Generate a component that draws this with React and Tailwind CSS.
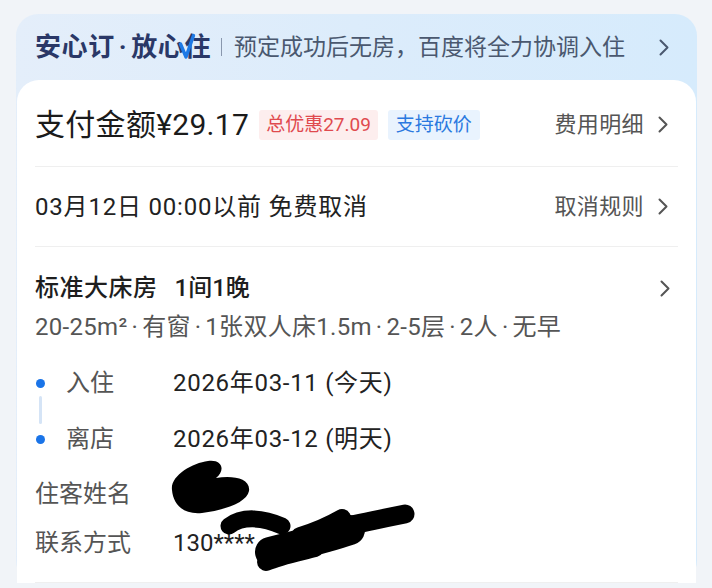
import React from "react";

const Chevron = ({ className = "" }) => (
  <svg width="10" height="17" viewBox="0 0 10 17" className={className} fill="none">
    <path d="M1.5 1.5 L8.5 8.5 L1.5 15.5" stroke="currentColor" strokeWidth="2" strokeLinecap="round" strokeLinejoin="round" />
  </svg>
);

const Dot = () => <span className="mx-[4px]">·</span>;

export default function App() {
  return (
    <div
      className="w-[712px] h-[588px] overflow-hidden bg-[#f1f4f8] pt-[14px] px-[16px] relative"
      style={{ fontFamily: 'Roboto, "Noto Sans CJK SC", "Noto Sans", sans-serif' }}
    >
      <div className="rounded-[22px] bg-gradient-to-r from-[#e4eefa] via-[#dcecfb] to-[#d6ebfc] w-[681px]">
        {/* header */}
        <div className="h-[66px] flex items-center pl-[19px] pr-[28px]">
          <div className="flex items-center text-[26px] font-bold text-[#2a3867] leading-none tracking-[0.6px]">
            <span>安心订</span>
            <span className="mx-[4px]">·</span>
            <span>放心</span>
            <span className="relative">
              <span>住</span>
              <svg className="absolute left-[-6px] top-[-1px]" width="18" height="27" viewBox="0 0 18 27" fill="none">
                <path d="M2.5 11 L8 24 L15.5 2.5" stroke="#1e7ae6" strokeWidth="3.4" strokeLinecap="round" strokeLinejoin="round" />
              </svg>
            </span>
          </div>
          <div className="w-px h-[18px] bg-[#8997ad] ml-[10px] mr-[12px]" />
          <div className="text-[23px] text-[#4a586f] leading-none">预定成功后无房，百度将全力协调入住</div>
          <div className="flex-1" />
          <Chevron className="text-[#4a586f]" />
        </div>

        {/* white card */}
        <div className="mx-px rounded-t-[22px] bg-white px-[18px] relative">
          <div className="h-[87px] border-b border-[#efefef] flex items-center pr-[10px] pt-[3px]">
            <span className="text-[30px] text-[#1b1b1b] leading-none tracking-[0.3px]">支付金额¥29.17</span>
            <span className="ml-[10px] h-[30px] px-[7px] flex items-center bg-[#fdeeee] text-[#e04a4e] text-[19px] rounded-[3px] leading-none">总优惠27.09</span>
            <span className="ml-[10px] h-[30px] px-[8px] flex items-center bg-[#e9f3fe] text-[#2b79e0] text-[19px] rounded-[3px] leading-none">支持砍价</span>
            <div className="flex-1" />
            <span className="text-[22px] text-[#555] leading-none tracking-[0.4px]">费用明细</span>
            <Chevron className="text-[#555] ml-[14px]" />
          </div>

          <div className="h-[80px] border-b border-[#efefef] flex items-center pr-[10px]">
            <span className="text-[24px] text-[#222] leading-none tracking-[0.8px]">03月12日 00:00以前 免费取消</span>
            <div className="flex-1" />
            <span className="text-[22px] text-[#555] leading-none tracking-[0.4px]">取消规则</span>
            <Chevron className="text-[#555] ml-[14px]" />
          </div>

          <div className="border-b border-[#efefef] pb-[17px]">
            <div className="mt-[24px] h-[34px] flex items-center pr-[8px]">
              <span className="text-[24px] font-medium text-[#1e1e1e] leading-none tracking-[0.5px]">标准大床房</span>
              <span className="ml-[17px] text-[24px] font-medium text-[#1e1e1e] leading-none">1间1晚</span>
              <div className="flex-1" />
              <Chevron className="text-[#555]" />
            </div>
            <div className="mt-[5px] h-[34px] flex items-center text-[24px] text-[#555] leading-none tracking-[0.3px]">
              <span>20-25m²</span>
              <Dot />
              <span>有窗</span>
              <Dot />
              <span>1张双人床1.5m</span>
              <Dot />
              <span>2-5层</span>
              <Dot />
              <span>2人</span>
              <Dot />
              <span>无早</span>
            </div>

            <div className="mt-[11px] flex">
              <div className="w-[10px] flex flex-col items-center">
                <div className="mt-[24px] w-[9px] h-[9px] rounded-full bg-[#1a74e8]" />
                <div className="mt-[8px] w-[3px] h-[28px] rounded-full bg-[#d5e4f6]" />
                <div className="mt-[11px] w-[9px] h-[9px] rounded-full bg-[#1a74e8]" />
              </div>
              <div className="ml-[21px] flex flex-col">
                <div className="h-[56px] flex items-center">
                  <span className="w-[107px] text-[24px] text-[#555] leading-none">入住</span>
                  <span className="text-[24px] text-[#222] leading-none tracking-[0.7px]">2026年03-11 (今天)</span>
                </div>
                <div className="h-[56px] flex items-center">
                  <span className="w-[107px] text-[24px] text-[#555] leading-none">离店</span>
                  <span className="text-[24px] text-[#222] leading-none tracking-[0.7px]">2026年03-12 (明天)</span>
                </div>
              </div>
            </div>
            <div className="h-[54px] flex items-center">
              <span className="w-[138px] text-[24px] text-[#555] leading-none">住客姓名</span>
            </div>
            <div className="h-[44px] flex items-center">
              <span className="w-[138px] text-[24px] text-[#555] leading-none">联系方式</span>
              <span className="text-[24px] text-[#222] leading-none">130****</span>
            </div>
          </div>
        </div>
      </div>

      {/* redaction scribbles */}
      <svg className="absolute left-0 top-0 pointer-events-none" width="712" height="588" viewBox="0 0 712 588" fill="none">
        <path
          d="M172 490 C 170 476, 192 463, 208 461 C 222 459, 226 470, 216 478 C 232 475, 251 478, 249 491 C 247 502, 226 510, 202 513 C 182 515, 173 503, 172 490 Z"
          fill="#000"
        />
        <path d="M229 526 C 242 516, 262 517, 282 526" stroke="#000" strokeWidth="17" strokeLinecap="round" strokeLinejoin="round" />
        <path d="M270 552 C 292 546, 320 540, 350 530" stroke="#000" strokeWidth="30" strokeLinecap="round" strokeLinejoin="round" />
        <path d="M266 562 C 280 556, 300 552, 315 548" stroke="#000" strokeWidth="18" strokeLinecap="round" />
        <path d="M300 536 C 320 530, 335 522, 342 518" stroke="#000" strokeWidth="18" strokeLinecap="round" />
        <path d="M340 528 C 360 523, 385 518, 405 514" stroke="#000" strokeWidth="19" strokeLinecap="round" />
      </svg>
    </div>
  );
}
